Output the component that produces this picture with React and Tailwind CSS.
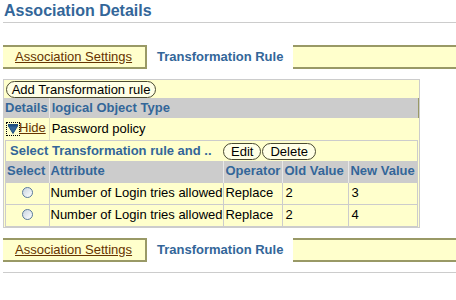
const olive = 'border-[#999966]'

function Pill({ children, className = '' }) {
  return (
    <span
      className={`inline-flex items-center whitespace-nowrap h-[17px] px-[7px] rounded-full border border-[#4a4a30] bg-[#ffffe6] text-[13px] leading-none text-black ${className}`}
    >
      {children}
    </span>
  )
}

function Tabs() {
  return (
    <div className="flex h-[24px] text-[13px] leading-[16px]">
      <div className={`w-[144px] flex items-center pl-[12px] bg-[#ffffcc] border-t-2 border-b-2 border-r-2 ${olive}`}>
        <span className="underline text-[#663300]">Association Settings</span>
      </div>
      <div className="w-[146px] flex items-center pl-[10px] bg-white">
        <span className="font-bold text-[#336699]">Transformation Rule</span>
      </div>
      <div className={`flex-1 bg-[#ffffcc] border-t-2 border-b-2 ${olive}`} />
    </div>
  )
}

function Radio() {
  return (
    <span className="inline-block w-[11px] h-[11px] rounded-full border border-[#5a7a9a] bg-gradient-to-br from-[#c8d4e0] to-white" />
  )
}

function HideIcon() {
  return (
    <span className="inline-flex items-center justify-center w-[14px] h-[14px] border border-dotted border-black">
      <svg width="12" height="11" viewBox="0 0 12 11">
        <rect x="1" y="1" width="10" height="2" fill="#1f4f80" />
        <polygon points="1.5,3 10.5,3 6,10.5" fill="#336699" stroke="#1f4f80" strokeWidth="1" />
      </svg>
    </span>
  )
}

const rows = [
  { attr: 'Number of Login tries allowed', op: 'Replace', oldV: '2', newV: '3' },
  { attr: 'Number of Login tries allowed', op: 'Replace', oldV: '2', newV: '4' },
]

export default function App() {
  return (
    <div className="w-[456px] h-[300px] overflow-hidden bg-white font-['Liberation_Sans',Arial,sans-serif]">
      <div className="ml-[3px] pt-[2px] pb-[2px] border-b border-[#cccccc]">
        <h1 className="pl-[1px] text-[16px] leading-[18px] font-bold text-[#336699]">Association Details</h1>
      </div>

      <div className="mt-[22px] ml-[3px]">
        <Tabs />
      </div>

      <div className="mt-[10px] ml-[3px] w-[417px] border border-[#cccccc] bg-[#ffffcc] leading-[16px]">
        <div className="px-[2px] pt-[1px] h-[18px]">
          <Pill className="w-[150px] justify-center">Add Transformation rule</Pill>
        </div>
        <table className="w-full border-collapse text-[13px]">
          <thead>
            <tr className="h-[20px] bg-[#cccccc] text-[#336699] font-bold">
              <th className="w-[45px] px-[1px] text-left border-r border-[#e8e8e8]">Details</th>
              <th className="px-[2px] text-left border-r border-[#999966]">logical Object Type</th>
            </tr>
          </thead>
          <tbody>
            <tr className="h-[22px]">
              <td className="px-[2px] border-r border-[#e0e0c0] whitespace-nowrap">
                <span className="inline-flex items-end">
                  <HideIcon />
                  <span className="underline text-[#663300] -ml-[1px]">Hide</span>
                </span>
              </td>
              <td className="px-[2px] text-black">Password policy</td>
            </tr>
          </tbody>
        </table>

        <div className="mx-[1px] border border-[#cccccc]">
          <div className="h-[20px] flex items-center pl-[4px] text-[13px]">
            <span className="font-bold text-[#336699] w-[213px] whitespace-nowrap">Select Transformation rule and ..</span>
            <Pill>Edit</Pill>
            <Pill className="ml-[1px]">Delete</Pill>
          </div>
          <table className="w-full border-collapse text-[13px]">
            <thead>
              <tr className="h-[21px] bg-[#cccccc] text-[#336699] font-bold text-left">
                <th className="w-[43px] px-[1px] border-r border-[#e8e8e8]">Select</th>
                <th className="w-[172px] px-[1px] border-r border-[#e8e8e8]">Attribute</th>
                <th className="w-[59px] px-[1px] border-r border-[#e8e8e8]">Operator</th>
                <th className="w-[66px] px-[1px] border-r border-[#e8e8e8]">Old Value</th>
                <th className="px-[1px]">New Value</th>
              </tr>
            </thead>
            <tbody>
              {rows.map((r, i) => (
                <tr key={i} className="h-[22px] border-t border-[#cccccc] text-black">
                  <td className="text-center border-r border-[#cccccc]">
                    <span className="inline-flex items-center justify-center pt-[2px]"><Radio /></span>
                  </td>
                  <td className="px-[1px] border-r border-[#cccccc] whitespace-nowrap">{r.attr}</td>
                  <td className="px-[1px] border-r border-[#cccccc]">{r.op}</td>
                  <td className="px-[2px] border-r border-[#cccccc]">{r.oldV}</td>
                  <td className="px-[2px]">{r.newV}</td>
                </tr>
              ))}
            </tbody>
          </table>
        </div>
      </div>

      <div className="mt-[10px] ml-[3px]">
        <Tabs />
      </div>
      <div className="mt-[10px] ml-[3px] border-b border-[#cccccc]" />
    </div>
  )
}
